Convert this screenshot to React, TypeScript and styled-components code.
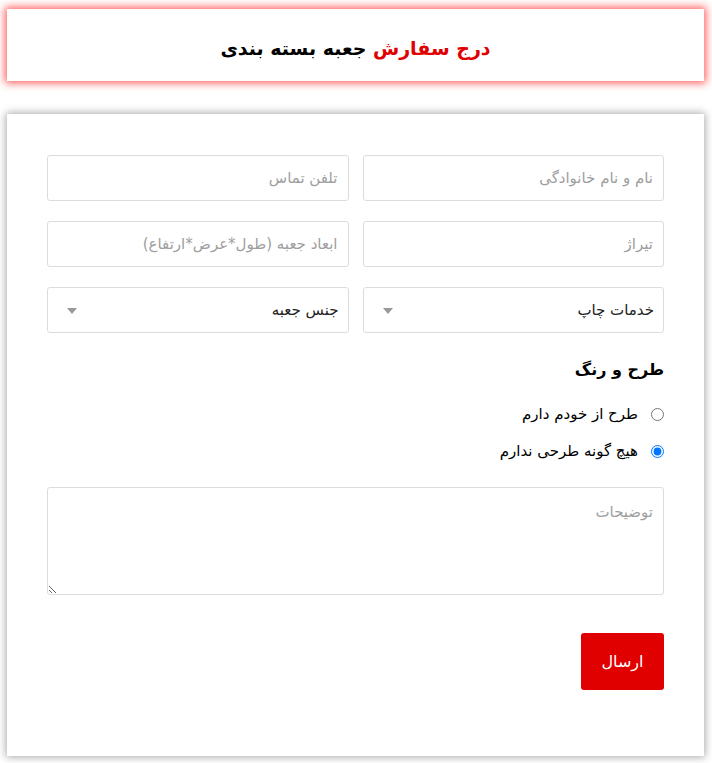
import styled, { createGlobalStyle } from "styled-components";

const GlobalStyle = createGlobalStyle`
  html, body {
    margin: 0;
    padding: 0;
    background: #ffffff;
  }
  body {
    font-family: Tahoma, "DejaVu Sans", "Noto Sans", sans-serif;
  }
`;

const Page = styled.div`
  direction: rtl;
  padding: 9px 8px 8px 7px;
  display: flex;
  flex-direction: column;
  gap: 33px;
`;

const Header = styled.header`
  box-sizing: border-box;
  height: 72px;
  padding-top: 6px;
  background: #ffffff;
  box-shadow: 0 0 8px 2px rgba(255, 40, 40, 0.75);
  display: flex;
  align-items: center;
  justify-content: center;
`;

const Title = styled.h1`
  margin: 0;
  font-size: 19px;
  font-weight: 700;
  color: #000000;
`;

const Accent = styled.span`
  color: #e00000;
`;

const Card = styled.form`
  background: #ffffff;
  box-shadow: 0 0 8px 1px rgba(0, 0, 0, 0.35);
  padding: 41px 40px 66px 40px;
  display: flex;
  flex-direction: column;
`;

const Grid = styled.div`
  display: grid;
  grid-template-columns: 1fr 1fr;
  column-gap: 14px;
  row-gap: 20px;
`;

const Field = styled.input`
  box-sizing: border-box;
  height: 46px;
  width: 100%;
  border: 1px solid #dcdcdc;
  border-radius: 3px;
  padding: 0 10px;
  font-family: inherit;
  font-size: 15px;
  color: #333;
  outline: none;
  &::placeholder {
    color: #9e9e9e;
  }
`;

const SelectWrap = styled.div`
  position: relative;
`;

const Select = styled.select`
  box-sizing: border-box;
  height: 46px;
  width: 100%;
  border: 1px solid #dcdcdc;
  border-radius: 3px;
  padding: 0 9px;
  font-family: inherit;
  font-size: 15px;
  color: #222;
  background: #ffffff;
  appearance: none;
  outline: none;
`;

const Arrow = styled.span`
  position: absolute;
  left: 20px;
  top: 21px;
  width: 0;
  height: 0;
  border-left: 5px solid transparent;
  border-right: 5px solid transparent;
  border-top: 6px solid #999;
  pointer-events: none;
`;

const SectionTitle = styled.h3`
  margin: 27px 0 0 0;
  font-size: 16px;
  font-weight: 700;
  color: #000;
`;

const RadioGroup = styled.div`
  margin-top: 23px;
  display: flex;
  flex-direction: column;
  gap: 13px;
`;

const RadioLabel = styled.label`
  display: flex;
  align-items: center;
  gap: 13px;
  font-size: 15px;
  color: #000;
  height: 24px;
`;

const Radio = styled.input`
  margin: 0;
  width: 13px;
  height: 13px;
`;

const Notes = styled.textarea`
  box-sizing: border-box;
  margin-top: 24px;
  height: 108px;
  width: 100%;
  border: 1px solid #dcdcdc;
  border-radius: 3px;
  padding: 15px 10px;
  font-family: inherit;
  font-size: 15px;
  outline: none;
  &::placeholder {
    color: #9e9e9e;
  }
`;

const Actions = styled.div`
  margin-top: 38px;
  display: flex;
`;

const Submit = styled.button`
  width: 83px;
  height: 57px;
  border: none;
  border-radius: 3px;
  background: #e00000;
  color: #ffffff;
  font-family: inherit;
  font-size: 16px;
  cursor: pointer;
`;

export default function App() {
  return (
    <>
      <GlobalStyle />
      <Page>
        <Header>
          <Title>
            <Accent>درج سفارش</Accent> جعبه بسته بندی
          </Title>
        </Header>
        <Card onSubmit={(e) => e.preventDefault()}>
          <Grid>
            <Field placeholder="نام و نام خانوادگی" />
            <Field placeholder="تلفن تماس" />
            <Field placeholder="تیراژ" />
            <Field placeholder="ابعاد جعبه (طول*عرض*ارتفاع)" />
            <SelectWrap>
              <Select defaultValue="print">
                <option value="print">خدمات چاپ</option>
              </Select>
              <Arrow />
            </SelectWrap>
            <SelectWrap>
              <Select defaultValue="kind">
                <option value="kind">جنس جعبه</option>
              </Select>
              <Arrow />
            </SelectWrap>
          </Grid>
          <SectionTitle>طرح و رنگ</SectionTitle>
          <RadioGroup>
            <RadioLabel>
              <Radio type="radio" name="design" />
              طرح از خودم دارم
            </RadioLabel>
            <RadioLabel>
              <Radio type="radio" name="design" defaultChecked />
              هیچ گونه طرحی ندارم
            </RadioLabel>
          </RadioGroup>
          <Notes placeholder="توضیحات" />
          <Actions>
            <Submit type="submit">ارسال</Submit>
          </Actions>
        </Card>
      </Page>
    </>
  );
}
